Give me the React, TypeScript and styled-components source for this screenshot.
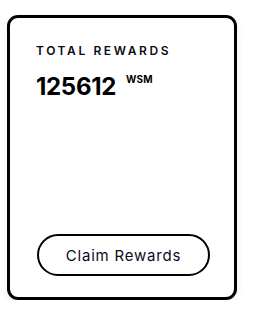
import React from "react";
import styled, { createGlobalStyle } from "styled-components";

const GlobalStyle = createGlobalStyle`
  body {
    margin: 0;
    background: #ffffff;
    font-family: "Inter", "Roboto", sans-serif;
  }
`;

const Page = styled.div`
  padding: 15px 0 0 7px;
`;

const Card = styled.section`
  box-sizing: border-box;
  width: 230px;
  height: 285px;
  border: 3px solid #000;
  border-radius: 11px;
  box-shadow: 0 4px 10px rgba(0, 0, 0, 0.07);
  display: flex;
  flex-direction: column;
  justify-content: space-between;
  padding: 25px 20px 21px 26px;
  background: #fff;
`;

const Label = styled.h3`
  margin: 0;
  font-size: 12px;
  font-weight: 600;
  letter-spacing: 2.6px;
  color: #0a0a14;
  line-height: 15px;
  white-space: nowrap;
`;

const Amount = styled.div`
  margin-top: 16px;
  display: flex;
  align-items: flex-start;
  gap: 10px;
  font-size: 24px;
  font-weight: 700;
  letter-spacing: -0.3px;
  color: #000;
  line-height: 26px;
`;

const Unit = styled.span`
  font-size: 10px;
  font-weight: 700;
  letter-spacing: 0.2px;
  line-height: 10px;
  margin-top: 0px;
`;

const ClaimButton = styled.button`
  box-sizing: border-box;
  width: 173px;
  height: 42px;
  margin-left: 1px;
  border: 2px solid #000;
  border-radius: 21px;
  background: #fff;
  font-family: "Inter", "Roboto", sans-serif;
  font-size: 15px;
  font-weight: 400;
  color: #0a0a1e;
  letter-spacing: 0.8px;
  cursor: pointer;
`;

export default function App() {
  return (
    <>
      <GlobalStyle />
      <Page>
        <Card>
          <div>
            <Label>TOTAL REWARDS</Label>
            <Amount>
              125612<Unit>WSM</Unit>
            </Amount>
          </div>
          <ClaimButton>Claim Rewards</ClaimButton>
        </Card>
      </Page>
    </>
  );
}
